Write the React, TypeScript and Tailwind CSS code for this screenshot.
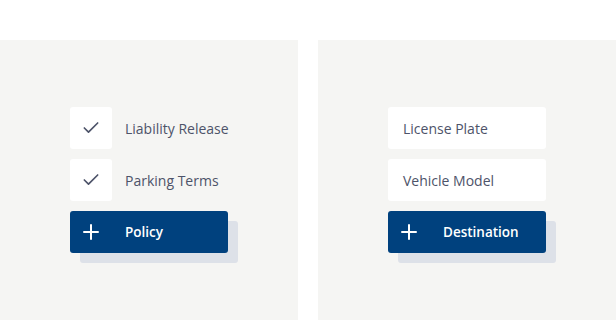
import { Check, Plus } from 'lucide-react';

function CheckRow({ label }: { label: string }) {
  return (
    <div className="flex items-center h-[42px]">
      <div className="w-[42px] h-[42px] bg-white rounded-[3px] flex items-center justify-center">
        <Check className="w-[20px] h-[20px] text-[#4d5369]" strokeWidth={2} />
      </div>
      <span className="ml-[13px] text-[14px] text-[#4d5369]">{label}</span>
    </div>
  );
}

function Field({ label }: { label: string }) {
  return (
    <div className="w-[158px] h-[42px] bg-white rounded-[3px] flex items-center px-[15px] text-[14px] text-[#4d5369]">
      {label}
    </div>
  );
}

function AddButton({ label }: { label: string }) {
  return (
    <div className="relative w-[168px] h-[52px]">
      <div className="absolute left-[10px] top-[10px] w-[158px] h-[42px] bg-[#dde1e8] rounded-[3px]" />
      <div className="relative w-[158px] h-[42px] bg-[#00417e] rounded-[3px] flex items-center pl-[9px] text-white">
        <Plus className="w-[24px] h-[24px]" strokeWidth={2} />
        <span className="ml-[22px] text-[13.5px] font-semibold">{label}</span>
      </div>
    </div>
  );
}

export default function App() {
  return (
    <div
      className="w-[616px] h-[320px] bg-white pt-[40px] flex gap-[20px]"
      style={{ fontFamily: '"Open Sans", sans-serif' }}
    >
      <div className="w-[298px] h-[280px] bg-[#f5f5f3] pl-[70px] pt-[67px] flex flex-col gap-[10px]">
        <CheckRow label="Liability Release" />
        <CheckRow label="Parking Terms" />
        <AddButton label="Policy" />
      </div>
      <div className="w-[298px] h-[280px] bg-[#f5f5f3] pl-[70px] pt-[67px] flex flex-col gap-[10px]">
        <Field label="License Plate" />
        <Field label="Vehicle Model" />
        <AddButton label="Destination" />
      </div>
    </div>
  );
}
